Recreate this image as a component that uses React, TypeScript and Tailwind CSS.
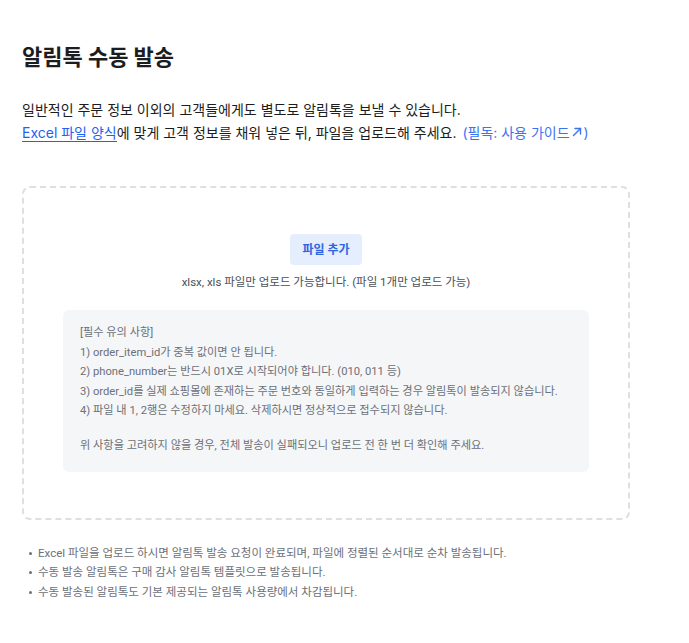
const notices = [
  "1) order_item_id가 중복 값이면 안 됩니다.",
  "2) phone_number는 반드시 01X로 시작되어야 합니다. (010, 011 등)",
  "3) order_id를 실제 쇼핑몰에 존재하는 주문 번호와 동일하게 입력하는 경우 알림톡이 발송되지 않습니다.",
  "4) 파일 내 1, 2행은 수정하지 마세요. 삭제하시면 정상적으로 접수되지 않습니다.",
];

const footnotes = [
  "Excel 파일을 업로드 하시면 알림톡 발송 요청이 완료되며, 파일에 정렬된 순서대로 순차 발송됩니다.",
  "수동 발송 알림톡은 구매 감사 알림톡 템플릿으로 발송됩니다.",
  "수동 발송된 알림톡도 기본 제공되는 알림톡 사용량에서 차감됩니다.",
];

const roboto = { fontFamily: 'Roboto, "Noto Sans CJK KR", sans-serif' };

function ExternalArrow() {
  return (
    <svg
      width="10"
      height="10"
      viewBox="0 0 10 10"
      fill="none"
      stroke="currentColor"
      strokeWidth="1.4"
      strokeLinecap="round"
      strokeLinejoin="round"
      className="mx-[2px] mb-[2px]"
    >
      <path d="M1.5 8.5 L8.5 1.5" />
      <path d="M3 1.5 H8.5 V7" />
    </svg>
  );
}

export default function App() {
  return (
    <main
      className="min-h-[643px] bg-white px-[22px] pt-[43px] text-[#1b1d21]"
      style={{ fontFamily: 'Inter, "Noto Sans CJK KR", sans-serif' }}
    >
      <h1 className="text-[22px] font-bold leading-[28px]">알림톡 수동 발송</h1>

      <div className="mt-[27px] text-[14px] leading-[23px]">
        <p>일반적인 주문 정보 이외의 고객들에게도 별도로 알림톡을 보낼 수 있습니다.</p>
        <p>
          <a className="border-b border-[#1e63f0] text-[#1e63f0]">Excel 파일 양식</a>
          에 맞게 고객 정보를 채워 넣은 뒤, 파일을 업로드해 주세요.{" "}
          <a className="ml-[2px] inline-flex items-center text-[#3b74f0]">
            (필독: 사용 가이드
            <ExternalArrow />)
          </a>
        </p>
      </div>

      <section className="mt-[42px] flex w-[608px] flex-col items-center rounded-lg border-2 border-dashed border-[#dcdfe4] px-[39px] pb-[46px] pt-[46px]">
        <button
          type="button"
          className="h-[31px] rounded-[4px] bg-[#e4eefd] px-[12px] text-[12px] font-semibold text-[#2f66e0]"
        >
          파일 추가
        </button>
        <p className="mt-[8px] text-[11.5px] leading-[18px] text-[#4b4f56]" style={roboto}>
          xlsx, xls 파일만 업로드 가능합니다. (파일 1개만 업로드 가능)
        </p>

        <div
          className="mt-[19px] w-full rounded-md bg-[#f5f6f8] px-[17px] pb-[16px] pt-[13px] text-[11.2px] leading-[19.5px] text-[#6b7079]"
          style={roboto}
        >
          <p>[필수 유의 사항]</p>
          {notices.map((n) => (
            <p key={n} className="whitespace-nowrap">
              {n}
            </p>
          ))}
          <p className="mt-[15.5px]">
            위 사항을 고려하지 않을 경우, 전체 발송이 실패되오니 업로드 전 한 번 더 확인해 주세요.
          </p>
        </div>
      </section>

      <ul
        className="mt-[24px] flex flex-col text-[11.5px] leading-[19.5px] text-[#6b7079]"
        style={roboto}
      >
        {footnotes.map((f) => (
          <li key={f} className="flex items-center">
            <span className="ml-[7px] mr-[6px] h-[3px] w-[3px] rounded-full bg-[#6b7079]" />
            {f}
          </li>
        ))}
      </ul>
    </main>
  );
}
